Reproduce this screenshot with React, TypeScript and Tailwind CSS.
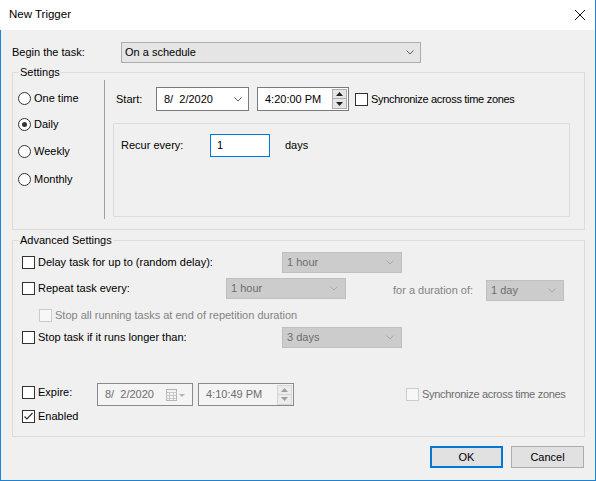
import React from "react";

const Chevron = ({ color = "#606060" }: { color?: string }) => (
  <svg width="8" height="5" viewBox="0 0 8 5" fill="none">
    <path d="M0.5 0.5 L4 4 L7.5 0.5" stroke={color} strokeWidth="1" />
  </svg>
);

const CheckBox = ({ checked = false, disabled = false }: { checked?: boolean; disabled?: boolean }) => (
  <span
    className={`w-[13px] h-[13px] shrink-0 border flex items-center justify-center ${
      disabled ? "border-[#cccccc] bg-[#f7f7f7]" : "border-[#333333] bg-white"
    }`}
  >
    {checked && (
      <svg width="11" height="11" viewBox="0 0 11 11" fill="none">
        <path d="M1.5 5.5 L4 8 L9.5 2" stroke="#333333" strokeWidth="1.2" />
      </svg>
    )}
  </span>
);

const Radio = ({ label, checked = false }: { label: string; checked?: boolean }) => (
  <div className="flex items-center h-[13px]">
    <span className="w-[13px] h-[13px] rounded-full border border-[#333333] bg-white flex items-center justify-center">
      {checked && <span className="w-[5px] h-[5px] rounded-full bg-[#333333]" />}
    </span>
    <span className="ml-[3px]">{label}</span>
  </div>
);

const DisabledCombo = ({ text, width }: { text: string; width: string }) => (
  <div className={`${width} h-[21px] border border-[#bfbfbf] bg-[#cccccc] flex items-center justify-between pl-[4px] pr-[7px] text-[#6d6d6d]`}>
    <span>{text}</span>
    <Chevron color="#a8a8a8" />
  </div>
);

const Spinner = ({ disabled = false }: { disabled?: boolean }) => {
  const box = disabled ? "border-[#d6d6d6] bg-[#ececec]" : "border-[#acacac] bg-[#e5e5e5]";
  const fill = disabled ? "#a0a0a0" : "#222222";
  return (
    <div className="flex flex-col w-[15px]">
      <div className={`h-[10px] border ${box} flex items-center justify-center`}>
        <svg width="7" height="4" viewBox="0 0 7 4"><path d="M0 4 L3.5 0 L7 4 Z" fill={fill} /></svg>
      </div>
      <div className={`h-[10px] border border-t-0 ${box} flex items-center justify-center`}>
        <svg width="7" height="4" viewBox="0 0 7 4"><path d="M0 0 L3.5 4 L7 0 Z" fill={fill} /></svg>
      </div>
    </div>
  );
};

export default function App() {
  return (
    <div className="w-[596px] h-[481px] flex flex-col bg-[#f0f0f0] border-r border-b border-[#1883d7] font-['Liberation_Sans',Arial,sans-serif] text-[11px] text-black">
      {/* title bar */}
      <div className="h-[30px] shrink-0 bg-white flex items-center justify-between pl-[9px] pr-[10px]">
        <span className="text-[11.5px]">New Trigger</span>
        <svg width="10" height="10" viewBox="0 0 10 10" fill="none">
          <path d="M0 0 L10 10 M10 0 L0 10" stroke="#111111" strokeWidth="1" />
        </svg>
      </div>

      <div className="flex-1 flex flex-col border-l border-[#1883d7] pl-[11px] pt-[12px]">
        <div className="flex items-center h-[21px]">
          <span className="w-[109px]">Begin the task:</span>
          <div className="w-[300px] h-[21px] border border-[#adadad] bg-[#e5e5e5] flex items-center justify-between pl-[3px] pr-[6px]">
            <span>On a schedule</span>
            <Chevron />
          </div>
        </div>

        {/* Settings */}
        <fieldset className="mt-[1px] w-[573px] h-[166px] border border-[#dcdcdc]">
          <legend className="ml-[6px] px-[1px] leading-[16px]">Settings</legend>
          <div className="flex">
            <div className="w-[91px] pl-[5px] flex flex-col">
              <div className="mt-[12px]"><Radio label="One time" /></div>
              <div className="mt-[13px]"><Radio label="Daily" checked /></div>
              <div className="mt-[14px]"><Radio label="Weekly" /></div>
              <div className="mt-[15px]"><Radio label="Monthly" /></div>
            </div>
            <div className="w-[1px] h-[139px] bg-[#a0a0a0]" />
            <div className="flex flex-col">
              <div className="mt-[7px] pl-[11px] flex items-center">
                <span className="w-[40px]">Start:</span>
                <div className="w-[93px] h-[24px] border border-[#7a7a7a] bg-white flex items-center justify-between pl-[7px] pr-[6px]">
                  <span className="whitespace-pre">8/  2/2020</span>
                  <Chevron />
                </div>
                <div className="ml-[8px] w-[92px] h-[24px] border border-[#7a7a7a] bg-white flex items-center justify-between pl-[7px] pr-[1px]">
                  <span>4:20:00 PM</span>
                  <Spinner />
                </div>
                <div className="ml-[6px] flex items-center">
                  <CheckBox />
                  <span className="ml-[3px] tracking-[-0.3px]">Synchronize across time zones</span>
                </div>
              </div>
              <div className="ml-[8px] mt-[12px] w-[457px] h-[94px] border border-[#dcdcdc] pl-[7px] pt-[10px] flex items-start">
                <span className="w-[89px] h-[23px] flex items-center">Recur every:</span>
                <div className="w-[60px] h-[23px] border border-[#0078d7] bg-white pl-[6px] flex items-center">1</div>
                <span className="ml-[15px] h-[23px] flex items-center">days</span>
              </div>
            </div>
          </div>
        </fieldset>

        {/* Advanced Settings */}
        <fieldset className="mt-[2px] w-[573px] h-[205px] border border-[#dcdcdc]">
          <legend className="ml-[6px] px-[1px] leading-[16px]">Advanced Settings</legend>
          <div className="flex flex-col pl-[9px]">
            <div className="mt-[4px] flex items-center h-[21px]">
              <div className="w-[260px] flex items-center">
                <CheckBox />
                <span className="ml-[3px]">Delay task for up to (random delay):</span>
              </div>
              <DisabledCombo text="1 hour" width="w-[120px]" />
            </div>

            <div className="mt-[5px] flex items-start">
              <div className="w-[204px] h-[21px] flex items-center">
                <CheckBox />
                <span className="ml-[3px]">Repeat task every:</span>
              </div>
              <DisabledCombo text="1 hour" width="w-[120px]" />
              <div className="mt-[2px] ml-[47px] flex items-center">
                <span className="w-[93px] text-[#838383]">for a duration of:</span>
                <DisabledCombo text="1 day" width="w-[78px]" />
              </div>
            </div>

            <div className="mt-[8px] ml-[17px] h-[13px] flex items-center">
              <CheckBox disabled />
              <span className="ml-[3px] text-[#838383]">Stop all running tasks at end of repetition duration</span>
            </div>

            <div className="mt-[5px] flex items-center h-[21px]">
              <div className="w-[260px] flex items-center">
                <CheckBox />
                <span className="ml-[3px]">Stop task if it runs longer than:</span>
              </div>
              <DisabledCombo text="3 days" width="w-[120px]" />
            </div>

            <div className="mt-[35px] flex items-start">
              <div className="mt-[3px] w-[75px] h-[13px] flex items-center">
                <CheckBox />
                <span className="ml-[3px]">Expire:</span>
              </div>
              <div className="w-[96px] h-[23px] border border-[#8a8a8a] bg-[#f4f4f4] flex items-center pl-[7px] text-[#6d6d6d]">
                <span className="whitespace-pre w-[61px]">8/  2/2020</span>
                <svg width="20" height="12" viewBox="0 0 20 12" fill="none">
                  <rect x="0.5" y="0.5" width="10" height="11" stroke="#b4b4b4" fill="#f4f4f4" />
                  <path d="M0.5 3.5 H10.5 M0.5 6.5 H10.5 M0.5 9.5 H10.5 M3.5 3.5 V11.5 M7.5 3.5 V11.5" stroke="#c8c8c8" />
                  <path d="M13 5 L19 5 L16 8 Z" fill="#b4b4b4" />
                </svg>
              </div>
              <div className="ml-[5px] w-[96px] h-[23px] border border-[#8a8a8a] bg-[#f4f4f4] flex items-center justify-between pl-[7px] pr-[1px] text-[#6d6d6d]">
                <span>4:10:49 PM</span>
                <Spinner disabled />
              </div>
              <div className="ml-[112px] self-center flex items-center">
                <CheckBox disabled />
                <span className="ml-[3px] tracking-[-0.3px] text-[#6d6d6d]">Synchronize across time zones</span>
              </div>
            </div>

            <div className="mt-[4px] h-[13px] flex items-center">
              <CheckBox checked />
              <span className="ml-[3px]">Enabled</span>
            </div>
          </div>
        </fieldset>

        <div className="mt-[9px] flex justify-end gap-[8px] pr-[11px]">
          <button className="w-[73px] h-[22px] border-2 border-[#0078d7] bg-[#e1e1e1] flex items-center justify-center">OK</button>
          <button className="w-[73px] h-[22px] border border-[#adadad] bg-[#e1e1e1] flex items-center justify-center">Cancel</button>
        </div>
      </div>
    </div>
  );
}
